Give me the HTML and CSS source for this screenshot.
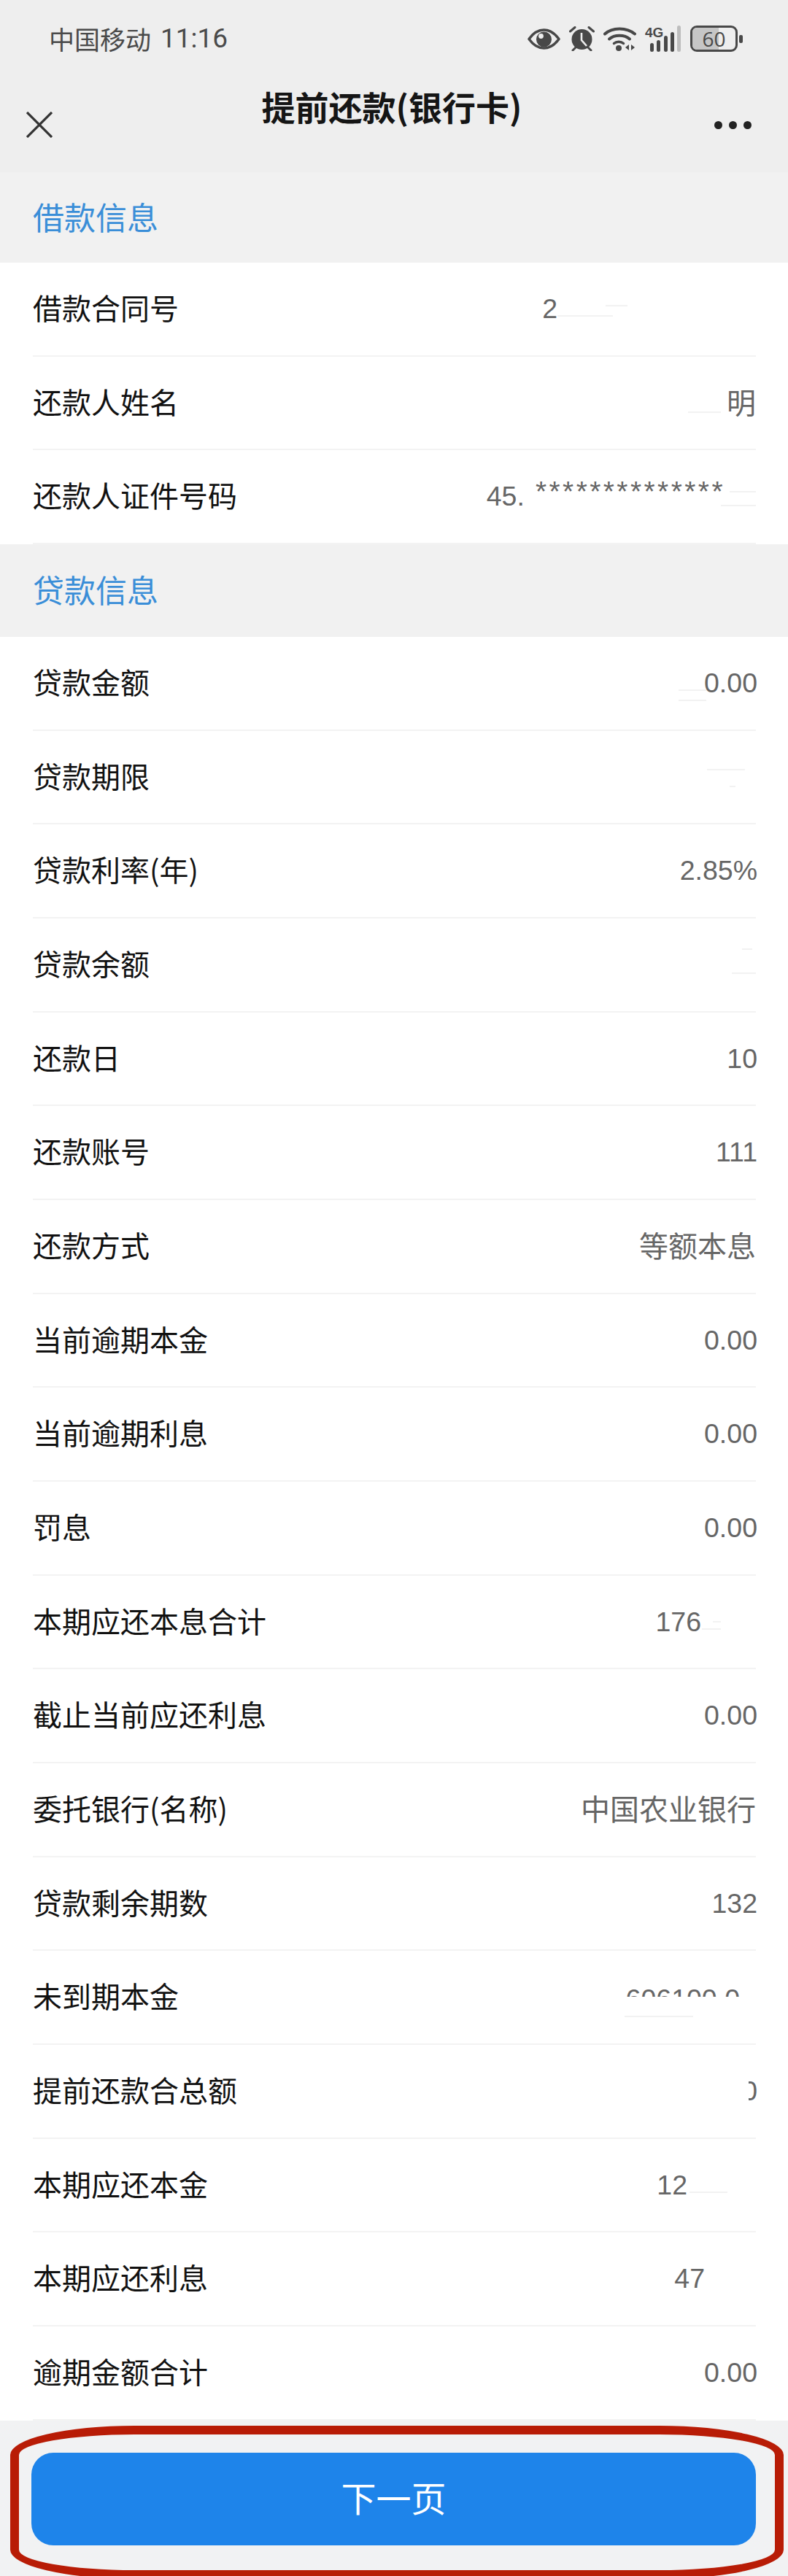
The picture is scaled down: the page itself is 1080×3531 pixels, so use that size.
FILE: index.html
```html
<!DOCTYPE html>
<html lang="zh-CN">
<head>
    <meta charset="UTF-8">
    <meta name="viewport" content="width=device-width, initial-scale=1.0">
    <title>提前还款(银行卡)</title>
    <link rel="stylesheet" href="styles.css">
</head>
<body>
    <header class="top">
        <div class="status-bar">
            <div class="carrier"><span>中国移动</span><span class="time">11:16</span></div>
            <div class="status-icons">
                <svg width="45" height="29" viewBox="0 0 45 29">
                    <path d="M2 14.5C8 6 15 2 22.5 2S37 6 43 14.5C37 23 30 27 22.5 27S8 23 2 14.5Z" fill="none" stroke="#484848" stroke-width="3.5" stroke-linejoin="round"/>
                    <circle cx="22.5" cy="15" r="10.5" fill="#484848"/>
                    <circle cx="18.5" cy="10.5" r="3.4" fill="#eee"/>
                </svg>
                <svg width="35" height="34" viewBox="0 0 35 34">
                    <circle cx="17.5" cy="18" r="14" fill="#484848"/>
                    <path d="M17 9v10l7 8" fill="none" stroke="#eee" stroke-width="2.6"/>
                    <path d="M1.5 7L8 1.5M33.5 7L27 1.5M5 33l4-4M30 33l-4-4" stroke="#484848" stroke-width="3" stroke-linecap="round"/>
                </svg>
                <svg width="45" height="34" viewBox="0 0 45 34">
                    <path d="M2 10.5C12 1 32 1 43 10.5" fill="none" stroke="#484848" stroke-width="4" stroke-linecap="round"/>
                    <path d="M8 17.5C15 11 29 11 36 17.5" fill="none" stroke="#484848" stroke-width="4" stroke-linecap="round"/>
                    <path d="M14.5 23.5C18 20.5 24 20.5 27.5 23.5" fill="none" stroke="#484848" stroke-width="3.5" stroke-linecap="round"/>
                    <circle cx="21" cy="30" r="4" fill="#484848"/>
                    <path d="M35 25v8l-5-4zM38 25v8l5-4z" fill="#484848"/>
                </svg>
                <svg width="50" height="36" viewBox="0 0 50 36">
                    <text x="0" y="16" class="net-label">4G</text>
                    <rect x="7" y="24" width="5" height="12" rx="2.5" fill="#484848"/>
                    <rect x="16" y="20" width="5" height="16" rx="2.5" fill="#484848"/>
                    <rect x="26" y="14" width="5" height="22" rx="2.5" fill="#484848"/>
                    <rect x="35" y="9" width="5" height="27" rx="2.5" fill="#484848"/>
                    <rect x="44" y="0" width="5" height="36" rx="2.5" fill="#bdbdbd"/>
                </svg>
                <div class="battery">
                    <div class="battery-body"><span class="battery-fill"></span><span class="battery-num">60</span></div>
                    <span class="battery-nub"></span>
                </div>
            </div>
        </div>
        <nav class="nav">
            <svg class="nav-close" width="36" height="36" viewBox="0 0 36 36">
                <path d="M1 1L35 35M35 1L1 35" stroke="#333" stroke-width="3.2"/>
            </svg>
            <h1 class="nav-title">提前还款(银行卡)</h1>
            <div class="nav-more"><i></i><i></i><i></i></div>
        </nav>
    </header>

    <h2 class="section-title section-first">借款信息</h2>
    <div class="list">
        <div class="row"><span class="label">借款合同号</span><span class="val gap-274">2</span><i class="smear s1"></i><i class="smear s2"></i></div>
        <div class="row"><span class="label">还款人姓名</span><span class="val val-cn">明</span><i class="smear s3"></i></div>
        <div class="row"><span class="label">还款人证件号码</span><span class="val id-no"><span>45.</span><span class="stars">**************</span></span><i class="smear s4"></i><i class="smear s5"></i></div>
    </div>

    <h2 class="section-title">贷款信息</h2>
    <div class="list">
        <div class="row"><span class="label">贷款金额</span><span class="val">0.00</span><i class="smear s6"></i><i class="smear s7"></i></div>
        <div class="row"><span class="label">贷款期限</span><i class="smear s8"></i><i class="smear s9"></i></div>
        <div class="row"><span class="label">贷款利率(年)</span><span class="val">2.85%</span></div>
        <div class="row"><span class="label">贷款余额</span><i class="smear s10"></i><i class="smear s11"></i></div>
        <div class="row"><span class="label">还款日</span><span class="val">10</span></div>
        <div class="row"><span class="label">还款账号</span><span class="val">111</span></div>
        <div class="row"><span class="label">还款方式</span><span class="val val-cn">等额本息</span></div>
        <div class="row"><span class="label">当前逾期本金</span><span class="val">0.00</span></div>
        <div class="row"><span class="label">当前逾期利息</span><span class="val">0.00</span></div>
        <div class="row"><span class="label">罚息</span><span class="val">0.00</span></div>
        <div class="row"><span class="label">本期应还本息合计</span><span class="val gap-77">176</span><i class="smear s12"></i><i class="smear s13"></i></div>
        <div class="row"><span class="label">截止当前应还利息</span><span class="val">0.00</span></div>
        <div class="row"><span class="label">委托银行(名称)</span><span class="val val-cn">中国农业银行</span></div>
        <div class="row"><span class="label">贷款剩余期数</span><span class="val">132</span></div>
        <div class="row"><span class="label">未到期本金</span><span class="val cut-top">606100.0</span><i class="smear s14"></i></div>
        <div class="row"><span class="label">提前还款合总额</span><span class="val cut-left">0</span></div>
        <div class="row"><span class="label">本期应还本金</span><span class="val gap-96">12</span><i class="smear s15"></i></div>
        <div class="row"><span class="label">本期应还利息</span><span class="val gap-72">47</span></div>
        <div class="row"><span class="label">逾期金额合计</span><span class="val">0.00</span></div>
    </div>

    <footer class="footer">
        <button class="next-btn" type="button">下一页</button>
        <div class="ring"></div>
    </footer>
</body>
</html>
```
FILE: styles.css
```css
* {
    box-sizing: border-box;
}
html, body {
    margin: 0;
    padding: 0;
}
body {
    width: 1080px;
    height: 3531px;
    overflow: hidden;
    background: #fff;
    font-family: "Noto Sans CJK SC", sans-serif;
    color: #111;
}

/* status bar and nav */
.top {
    height: 236px;
    background: #eee;
}
.status-bar {
    height: 106px;
    padding: 0 62px 0 67px;
    display: flex;
    justify-content: space-between;
    align-items: center;
}
.carrier {
    display: flex;
    align-items: center;
    gap: 13px;
    font-size: 35px;
    line-height: 40px;
    color: #4a4a4a;
}
.time {
    font-family: Roboto, sans-serif;
    font-size: 37px;
}
.status-icons {
    display: flex;
    align-items: center;
    gap: 12px;
}
.net-label {
    font-family: "Liberation Sans", sans-serif;
    font-size: 19px;
    font-weight: 700;
    fill: #484848;
}
.battery {
    display: flex;
    align-items: center;
    gap: 2px;
}
.battery-body {
    position: relative;
    width: 65px;
    height: 36px;
    border: 3px solid #484848;
    border-radius: 9px;
    overflow: hidden;
    display: flex;
    align-items: center;
    justify-content: center;
}
.battery-fill {
    position: absolute;
    left: 0;
    top: 0;
    bottom: 0;
    width: 36px;
    background: #c6c6c6;
}
.battery-num {
    position: relative;
    font-family: "Open Sans", sans-serif;
    font-size: 28px;
    line-height: 30px;
    color: #484848;
}
.battery-nub {
    width: 5px;
    height: 11px;
    border-radius: 2px;
    background: #484848;
}
.nav {
    height: 130px;
    padding: 0 42px 0 36px;
    display: grid;
    grid-template-columns: 1fr auto 1fr;
    align-items: center;
}
.nav-title {
    margin: 0 0 53px;
    font-size: 46px;
    line-height: 60px;
    font-weight: 700;
    color: #151515;
}
.nav-more {
    justify-self: end;
    display: flex;
    gap: 9px;
    margin-right: 8px;
}
.nav-more i {
    width: 11px;
    height: 11px;
    border-radius: 50%;
    background: #222;
}

/* sections */
.section-title {
    margin: 0;
    height: 127px;
    padding: 0 0 5px 45px;
    display: flex;
    align-items: center;
    background: #f1f1f1;
    font-size: 43px;
    font-weight: 400;
    color: #3a8ed8;
}
.section-first {
    height: 124px;
}
.list {
    padding: 0 44px 0 45px;
}
.row {
    position: relative;
    height: 128.68px;
    border-bottom: 2px solid #f3f3f3;
    display: flex;
    justify-content: space-between;
    align-items: center;
    color: #111;
}
.label {
    margin-bottom: 5px;
    font-size: 40px;
}
.val {
    margin-left: auto;
    margin-right: -2px;
    font-family: "Liberation Sans", "Noto Sans CJK SC", sans-serif;
    font-size: 37.5px;
    color: #666;
}
.val-cn {
    margin-right: 0;
    margin-bottom: 4px;
    font-size: 40px;
}

/* values that were wiped out in the original picture */
.gap-274 { margin-right: 272px; }
.gap-77 { margin-right: 75px; }
.gap-96 { margin-right: 94px; }
.gap-72 { margin-right: 70px; }
.id-no {
    display: flex;
    align-items: flex-start;
    gap: 15px;
    margin-right: 42px;
}
.stars {
    margin-top: -7px;
    font-size: 39px;
    letter-spacing: 3.4px;
}
.cut-top {
    height: 15px;
    margin-right: 22px;
    margin-bottom: 17px;
    line-height: 37px;
    overflow: hidden;
}
.cut-left {
    width: 12px;
    display: flex;
    justify-content: flex-end;
    overflow: hidden;
}
.smear {
    position: absolute;
    height: 2px;
    background: #f2f2f2;
}
.s1 { top: 72px; right: 196px; width: 76px; }
.s2 { top: 58px; right: 176px; width: 30px; }
.s3 { top: 75px; right: 48px; width: 45px; }
.s4 { top: 75px; right: 0; width: 48px; }
.s5 { top: 56px; right: 0; width: 36px; }
.s6 { top: 72px; right: 68px; width: 38px; }
.s7 { top: 86px; right: 68px; width: 38px; }
.s8 { top: 52px; right: 15px; width: 52px; }
.s9 { top: 75px; right: 28px; width: 8px; }
.s10 { top: 41px; right: 5px; width: 14px; }
.s11 { top: 74px; right: 0; width: 33px; }
.s12 { top: 72px; right: 48px; width: 26px; }
.s13 { top: 62px; right: 48px; width: 11px; }
.s14 { top: 89px; right: 86px; width: 94px; }
.s15 { top: 72px; right: 39px; width: 52px; }

/* bottom button */
.footer {
    position: relative;
    height: 213px;
    padding: 44px 43px 0;
    background: #f1f2f3;
    overflow: hidden;
}
.next-btn {
    display: block;
    width: 993px;
    height: 127px;
    border: none;
    border-radius: 30px;
    padding: 0 0 6px;
    background: #1e84ea;
    color: #fff;
    font-family: "Noto Sans CJK SC", sans-serif;
    font-size: 48px;
}
.ring {
    position: absolute;
    left: 14px;
    top: 7px;
    width: 1060px;
    height: 210px;
    border: 12px solid #b81c06;
    border-radius: 170px / 40px;
}
```
